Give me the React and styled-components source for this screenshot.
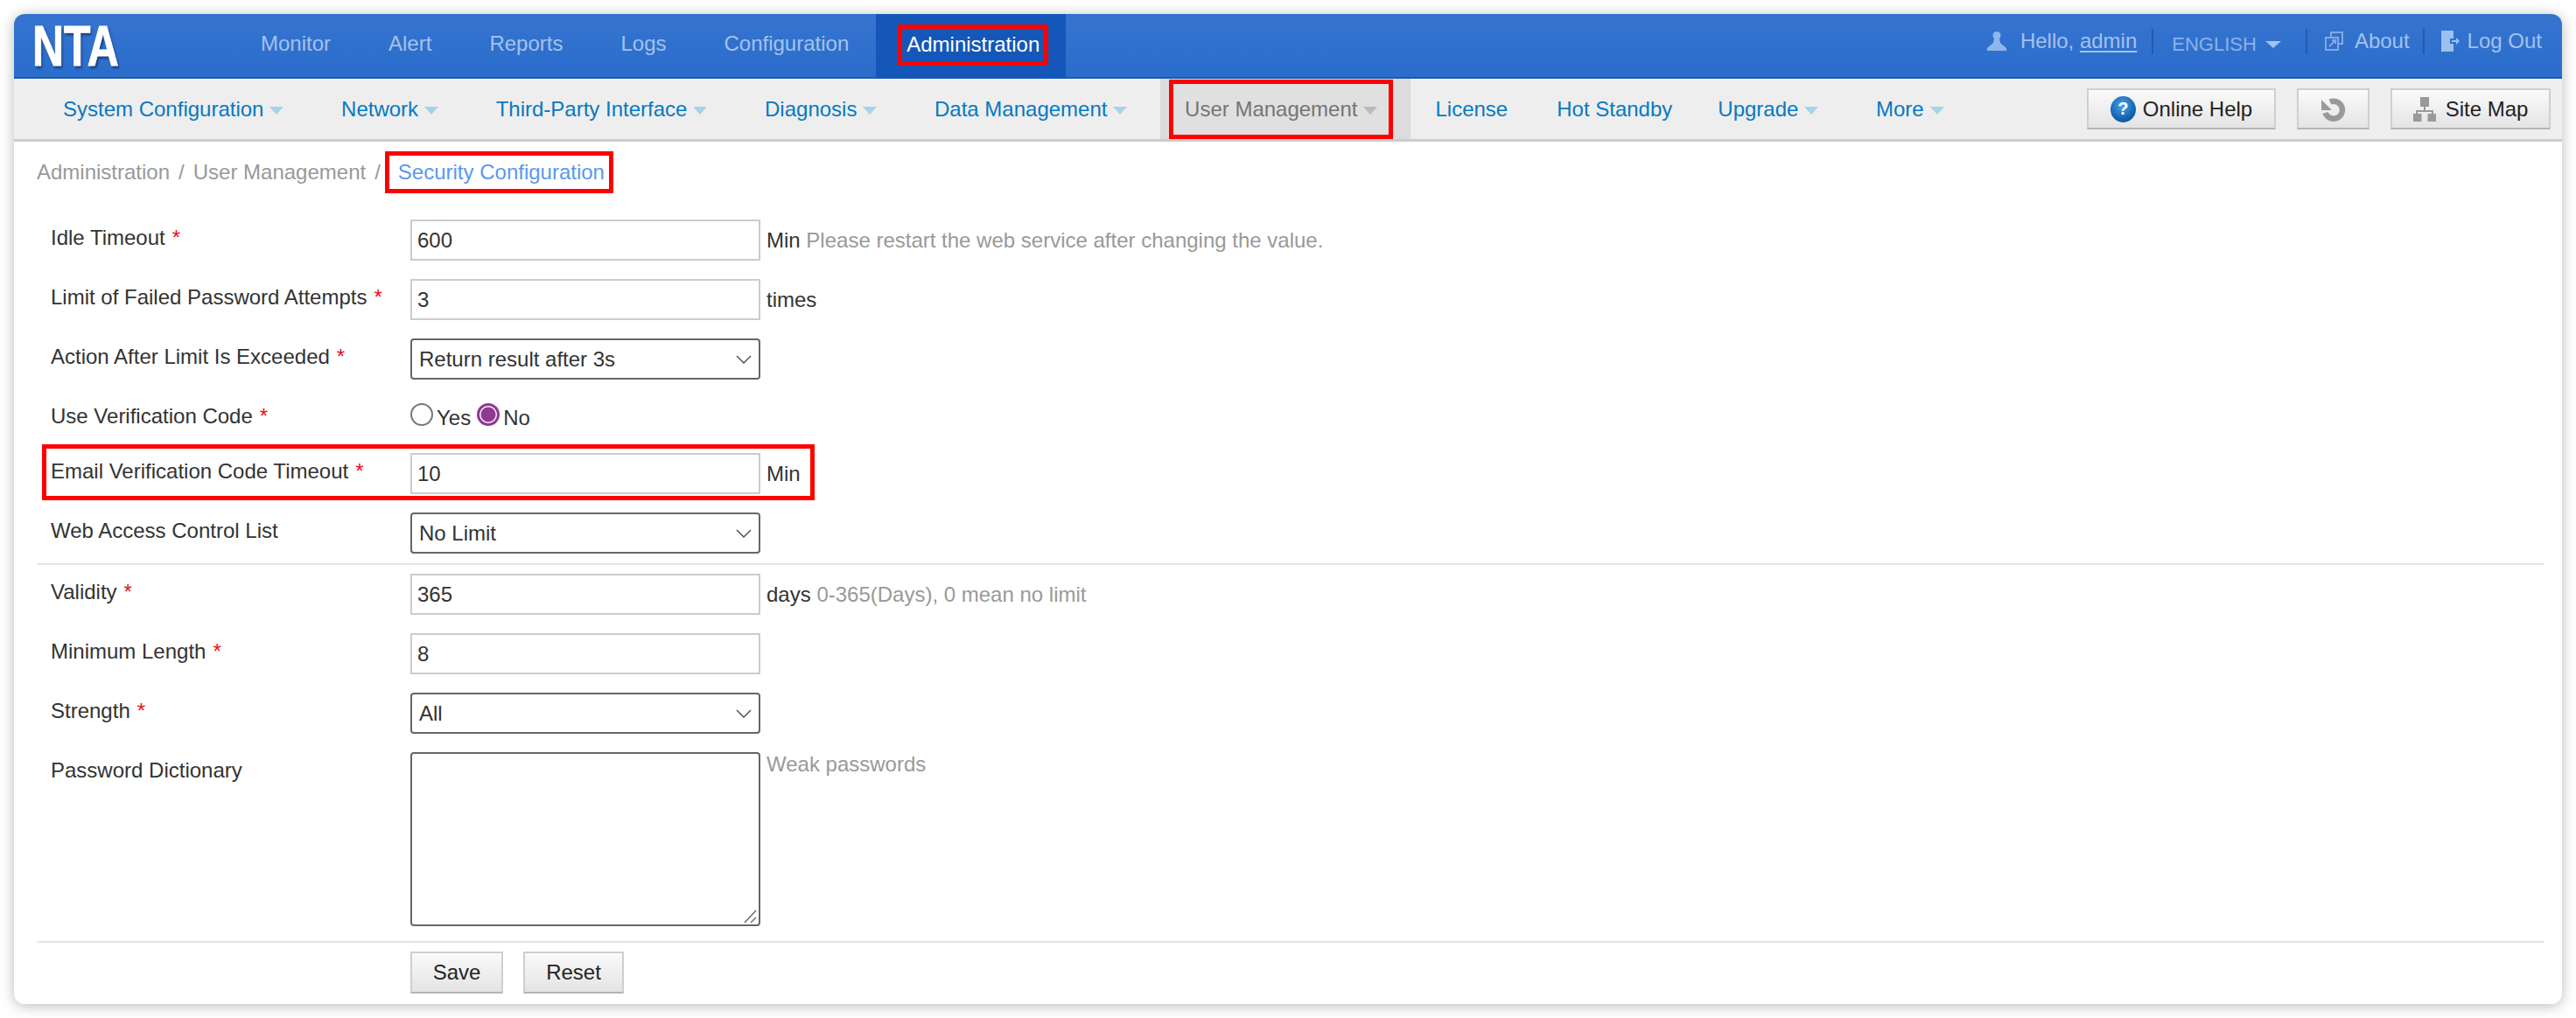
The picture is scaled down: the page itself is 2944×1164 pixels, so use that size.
import React from 'react';
import styled, { createGlobalStyle, css } from 'styled-components';

const Global = createGlobalStyle`
  html, body { margin: 0; padding: 0; background: #fff; }
  body { font-family: "Liberation Sans", Arial, sans-serif; font-size: 24px; color: #333; }
  * { box-sizing: border-box; }
`;

const chevron = `url("data:image/svg+xml,%3Csvg xmlns='http://www.w3.org/2000/svg' width='18' height='10'%3E%3Cpath d='M1 1l8 8 8-8' fill='none' stroke='%23555' stroke-width='1.5'/%3E%3C/svg%3E")`;
const grip = `url("data:image/svg+xml,%3Csvg xmlns='http://www.w3.org/2000/svg' width='16' height='16'%3E%3Cpath d='M1 15L14 1M8 15l6-6' fill='none' stroke='%23666' stroke-width='1.4'/%3E%3C/svg%3E")`;

const Page = styled.div`
  padding: 16px;
  width: 2944px;
  height: 1164px;
  overflow: hidden;
`;
const Window = styled.div`
  width: 2912px;
  height: 1132px;
  background: #fff;
  border-radius: 12px;
  box-shadow: 0 2px 16px rgba(0, 0, 0, 0.28);
  overflow: hidden;
  display: flex;
  flex-direction: column;
`;
const TopBar = styled.header`
  height: 74px;
  display: flex;
  background: linear-gradient(#3674cf, #2a6dcb);
  border-bottom: 2px solid #2159ac;
`;
const LogoBox = styled.div`
  width: 249px;
  padding: 2px 0 0 21px;
`;
const Logo = styled.div`
  font-size: 64px;
  font-weight: 700;
  line-height: 70px;
  color: #fff;
  -webkit-text-stroke: 1px #fff;
  transform: scaleX(0.78);
  transform-origin: left center;
  text-shadow: 2px 3px 3px rgba(8, 36, 90, 0.65);
`;
const TopNav = styled.nav`
  display: flex;
  height: 74px;
`;
const TopItem = styled.a`
  padding: 0 33px 6px;
  display: flex;
  align-items: center;
  color: #a3c2ee;
`;
const TopActive = styled.a`
  height: 74px;
  margin-left: -2px;
  padding: 0 25px 4px 30px;
  display: flex;
  align-items: center;
  background: #1557b9;
  color: #fff;
`;
const TopMark = styled.span`
  height: 37px;
  padding: 0 5px;
  display: flex;
  align-items: center;
  outline: 5px solid #ff0000;
`;
const UserArea = styled.div`
  margin-left: auto;
  padding: 0 23px 10px 0;
  display: flex;
  align-items: center;
  color: #a3c2ee;
`;
const UserLink = styled.span`
  text-decoration: underline;
  text-underline-offset: 3px;
`;
const Sep = styled.i`
  width: 2px;
  height: 29px;
  margin: ${p => p.$m};
  background: #2259b0;
  display: block;
`;
const Lang = styled.span`
  font-size: 22px;
  margin-top: 7px;
  color: #8db0e6;
`;
const LangCaret = styled.i`
  width: 0;
  height: 0;
  margin: 8px 0 0 10px;
  border-left: 9px solid transparent;
  border-right: 9px solid transparent;
  border-top: 8px solid #a3c2ee;
`;
const TopIcon = styled.svg`
  display: block;
  flex: none;
  margin: ${p => p.$m};
`;
const SubBar = styled.div`
  height: 72px;
  padding-left: 28px;
  display: flex;
  align-items: stretch;
  background: #eee;
  border-bottom: 3px solid #ccc;
`;
const SubItem = styled.a`
  padding: 1px ${p => (p.$plain ? '23px' : '28px')} 0 ${p => (p.$plain ? '23px' : p.$tight ? '19px' : '28px')};
  margin-right: ${p => (p.$plain ? '10px' : '9.6px')};
  display: flex;
  align-items: center;
  color: #0679c2;
`;
const SubActive = styled.a`
  margin-right: 5px;
  padding: 0 25px 0 15px;
  display: flex;
  align-items: center;
  background: #dcdcdc;
  color: #757575;
`;
const SubMark = styled.span`
  height: 58px;
  padding: 1px 13px 0;
  display: flex;
  align-items: center;
  background: #e0e0e0;
  outline: 5px solid #ff0000;
`;
const Caret = styled.i`
  width: 0;
  height: 0;
  margin: 2px 0 0 7px;
  border-left: 8px solid transparent;
  border-right: 8px solid transparent;
  border-top: 9px solid ${p => (p.$muted ? '#b9b9b9' : '#a5d3e8')};
`;
const Tools = styled.div`
  margin-left: auto;
  padding-right: 13px;
  display: flex;
  align-items: center;
  gap: 24px;
`;
const btn = css`
  height: 47px;
  display: flex;
  align-items: center;
  justify-content: center;
  font: inherit;
  color: #222;
  background: linear-gradient(#fafafa, #e4e4e4);
  border: 2px solid #cfcfcf;
  border-bottom-color: #b5b5b5;
  border-radius: 0;
`;
const ToolButton = styled.button`
  ${btn};
  width: ${p => p.$w}px;
  gap: ${p => p.$gap ?? 8}px;
`;
const HelpDot = styled.span`
  width: 29px;
  height: 30px;
  border-radius: 50%;
  display: flex;
  align-items: center;
  justify-content: center;
  font-size: 20px;
  font-weight: 700;
  color: #fff;
  background: radial-gradient(circle at 45% 35%, #4aa3e6, #1262b0 62%, #0c4a8c);
`;
const Crumbs = styled.div`
  padding: 16px 0 0 26px;
  display: flex;
  align-items: center;
  color: #999;
`;
const CrumbSep = styled.span`
  margin: 0 10px;
`;
const CrumbMark = styled.span`
  height: 38px;
  padding: 0 5px 0 10px;
  display: flex;
  align-items: center;
  color: #5b98ee;
  outline: 5px solid #ff0000;
`;
const Form = styled.form`
  padding: 30px 0 0 26px;
  display: flex;
  flex-direction: column;
  flex: 1;
`;
const Row = styled.div`
  display: grid;
  grid-template-columns: 404px 400px auto;
  column-gap: 7px;
  align-items: start;
  padding: 5px 0 2px 5px;
  margin: 0 0 ${p => p.$mb ?? 14}px 11px;
  ${p => p.$marked && css`
    width: 873px;
    outline: 5px solid #ff0000;
  `}
`;
const Label = styled.label`
  line-height: 42px;
  color: #333;
`;
const Star = styled.span`
  color: #e8101a;
  margin-left: 8px;
`;
const field = css`
  width: 400px;
  height: 47px;
  font: inherit;
  color: #333;
  background-color: #fff;
  display: block;
  outline: none;
`;
const TextInput = styled.input`
  ${field};
  padding: 0 6px;
  border: 2px solid #ccc;
`;
const Select = styled.select`
  ${field};
  appearance: none;
  padding: 0 30px 0 8px;
  border: 2px solid #666;
  border-radius: 4px;
  background-image: ${chevron};
  background-repeat: no-repeat;
  background-position: right 8px center;
`;
const Area = styled.textarea`
  ${field};
  height: 199px;
  resize: none;
  border: 2px solid #666;
  border-radius: 4px;
  background-image: ${grip};
  background-repeat: no-repeat;
  background-position: right 1px bottom 1px;
`;
const Suffix = styled.span`
  line-height: 47px;
  color: #333;
`;
const Hint = styled.span`
  color: #999;
  line-height: ${p => (p.$top ? '28px' : 'inherit')};
`;
const RadioGroup = styled.div`
  height: 45px;
  display: flex;
  align-items: center;
`;
const Radio = styled.input`
  appearance: none;
  width: 26px;
  height: 26px;
  margin: 0 4px 8px 0;
  border-radius: 50%;
  border: 2px solid #777;
  background: #fff;
  &:checked {
    border: 3px solid #8e3a91;
    background: radial-gradient(circle, #8e3a91 0 8px, #fff 9px);
  }
`;
const RadioText = styled.span`
  margin-right: 7px;
  color: #333;
`;
const Divider = styled.hr`
  height: 2px;
  margin: ${p => p.$m};
  width: 2866px;
  border: 0;
  background: #e4e4e4;
`;
const Actions = styled.div`
  padding-left: 427px;
  display: flex;
  gap: 23px;
`;
const ActionButton = styled.button`
  ${btn};
  width: ${p => p.$w}px;
  height: 48px;
`;

const UserGlyph = () => (
  <TopIcon $m="0 15px 0 0" width="24" height="22" viewBox="0 0 24 22" fill="#8fb6ea">
    <circle cx="12" cy="4.5" r="4.5" />
    <path d="M9 8h6l1 5 7 6v3H1v-3l7-6z" />
  </TopIcon>
);
const AboutGlyph = () => (
  <TopIcon $m="0 13px 0 0" width="21" height="22" viewBox="0 0 21 22" fill="none" stroke="#82a9e3" strokeWidth="2">
    <path d="M7 6V1h13v13h-5" />
    <rect x="1" y="7" width="14" height="14" />
    <path d="M5 17l7-7M8 10h4v4" />
  </TopIcon>
);
const LogoutGlyph = () => (
  <TopIcon $m="0 9px 0 0" width="21" height="24" viewBox="0 0 21 24" fill="#9cc0ef">
    <path d="M0 0h14v9h-4v6h4v9H0z" />
    <path d="M12 11h5V8l4 4-4 4v-3h-5z" />
  </TopIcon>
);
const RefreshGlyph = () => (
  <svg width="29" height="28" viewBox="0 0 29 28">
    <path d="M5.5 18A10 10 0 1 0 11 5.5" fill="none" stroke="#999" strokeWidth="6.5" />
    <path d="M1 3v12h12z" fill="#999" />
  </svg>
);
const SiteMapGlyph = () => (
  <svg width="26" height="28" viewBox="0 0 26 28" fill="#999">
    <rect x="8" y="0" width="10" height="11" />
    <rect x="0" y="19" width="9.5" height="9" />
    <rect x="16.5" y="19" width="9.5" height="9" />
    <path d="M12 11h2v4h9v4h-2v-2H5v2H3v-4h9z" />
  </svg>
);

const navTop = ['Monitor', 'Alert', 'Reports', 'Logs', 'Configuration'];

const Field = ({ label, required, children, after, ...rest }) => (
  <Row {...rest}>
    <Label>
      {label}
      {required && <Star>*</Star>}
    </Label>
    {children}
    {after}
  </Row>
);

export default function App() {
  return (
    <Page>
      <Global />
      <Window>
        <TopBar>
          <LogoBox>
            <Logo>NTA</Logo>
          </LogoBox>
          <TopNav>
            {navTop.map(n => (
              <TopItem key={n}>{n}</TopItem>
            ))}
            <TopActive>
              <TopMark>Administration</TopMark>
            </TopActive>
          </TopNav>
          <UserArea>
            <UserGlyph />
            <span>
              Hello, <UserLink>admin</UserLink>
            </span>
            <Sep $m="0 21px 0 17px" />
            <Lang>ENGLISH</Lang>
            <LangCaret />
            <Sep $m="0 20px 0 28px" />
            <AboutGlyph />
            <span>About</span>
            <Sep $m="0 19px 0 15px" />
            <LogoutGlyph />
            <span>Log Out</span>
          </UserArea>
        </TopBar>
        <SubBar>
          <SubItem>System Configuration<Caret /></SubItem>
          <SubItem>Network<Caret /></SubItem>
          <SubItem>Third-Party Interface<Caret /></SubItem>
          <SubItem>Diagnosis<Caret /></SubItem>
          <SubItem>Data Management<Caret /></SubItem>
          <SubActive>
            <SubMark>User Management<Caret $muted /></SubMark>
          </SubActive>
          <SubItem $plain>License</SubItem>
          <SubItem $plain>Hot Standby</SubItem>
          <SubItem $tight>Upgrade<Caret /></SubItem>
          <SubItem>More<Caret /></SubItem>
          <Tools>
            <ToolButton $w={216}>
              <HelpDot>?</HelpDot>
              Online Help
            </ToolButton>
            <ToolButton $w={83}>
              <RefreshGlyph />
            </ToolButton>
            <ToolButton $w={183} $gap={11}>
              <SiteMapGlyph />
              Site Map
            </ToolButton>
          </Tools>
        </SubBar>
        <Crumbs>
          <span>Administration</span>
          <CrumbSep>/</CrumbSep>
          <span>User Management</span>
          <CrumbSep>/</CrumbSep>
          <CrumbMark>Security Configuration</CrumbMark>
        </Crumbs>
        <Form>
          <Field
            label="Idle Timeout"
            required
            after={
              <Suffix>
                Min <Hint>Please restart the web service after changing the value.</Hint>
              </Suffix>
            }
          >
            <TextInput defaultValue="600" />
          </Field>
          <Field label="Limit of Failed Password Attempts" required after={<Suffix>times</Suffix>}>
            <TextInput defaultValue="3" />
          </Field>
          <Field label="Action After Limit Is Exceeded" required>
            <Select defaultValue="Return result after 3s">
              <option>Return result after 3s</option>
            </Select>
          </Field>
          <Field label="Use Verification Code" required $mb={11}>
            <RadioGroup>
              <Radio type="radio" name="code" />
              <RadioText>Yes</RadioText>
              <Radio type="radio" name="code" defaultChecked />
              <RadioText>No</RadioText>
            </RadioGroup>
          </Field>
          <Field label="Email Verification Code Timeout" required $marked after={<Suffix>Min</Suffix>}>
            <TextInput defaultValue="10" />
          </Field>
          <Field label="Web Access Control List" $mb={0}>
            <Select defaultValue="No Limit">
              <option>No Limit</option>
            </Select>
          </Field>
          <Divider $m="9px 0 5px 0" />
          <Field
            label="Validity"
            required
            after={
              <Suffix>
                days <Hint>0-365(Days), 0 mean no limit</Hint>
              </Suffix>
            }
          >
            <TextInput defaultValue="365" />
          </Field>
          <Field label="Minimum Length" required>
            <TextInput defaultValue="8" />
          </Field>
          <Field label="Strength" required>
            <Select defaultValue="All">
              <option>All</option>
            </Select>
          </Field>
          <Field label="Password Dictionary" $mb={0} after={<Hint $top>Weak passwords</Hint>}>
            <Area />
          </Field>
          <Divider $m="15px 0 10px 0" />
          <Actions>
            <ActionButton type="button" $w={106}>Save</ActionButton>
            <ActionButton type="button" $w={115}>Reset</ActionButton>
          </Actions>
        </Form>
      </Window>
    </Page>
  );
}
